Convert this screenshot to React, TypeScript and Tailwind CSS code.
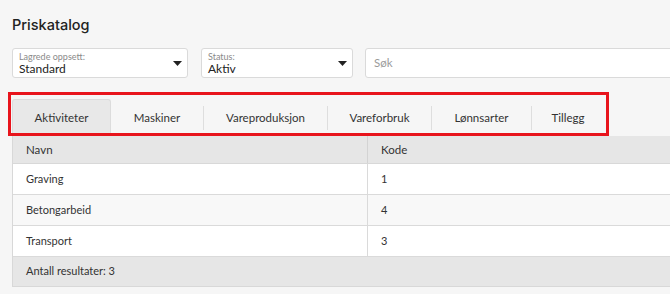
import React from "react";

const tabs = [
  { label: "Aktiviteter", w: "w-[99px]" },
  { label: "Maskiner", w: "w-[92px]" },
  { label: "Vareproduksjon", w: "w-[124px]" },
  { label: "Vareforbruk", w: "w-[104px]" },
  { label: "Lønnsarter", w: "w-[100px]" },
  { label: "Tillegg", w: "w-[73px]" },
];

const rows = [
  { navn: "Graving", kode: "1" },
  { navn: "Betongarbeid", kode: "4" },
  { navn: "Transport", kode: "3" },
];

function Caret() {
  return (
    <svg width="9" height="5" viewBox="0 0 9 5" className="shrink-0">
      <path d="M0 0h9L4.5 5z" fill="#222" />
    </svg>
  );
}

function Select({ label, value, width }: { label: string; value: string; width: string }) {
  return (
    <div className={`flex h-[30px] ${width} items-center justify-between rounded-[3px] border border-[#dadada] bg-white pl-[6px] pr-[5px]`}>
      <div className="flex flex-col leading-none">
        <span className="text-[9px] text-[#8a8a8a]">{label}</span>
        <span className="mt-[2px] text-[12px] text-[#222]">{value}</span>
      </div>
      <Caret />
    </div>
  );
}

export default function App() {
  return (
    <div className="relative h-[294px] w-[670px] overflow-hidden bg-[#f6f6f6] font-['Lato',sans-serif]">
      <div className="w-[760px] pl-3">
        <h1 className="pt-[15px] font-['Inter',sans-serif] text-[14.5px] font-medium leading-5 text-[#222]">Priskatalog</h1>

        <div className="mt-[13px] flex gap-3">
          <Select label="Lagrede oppsett:" value="Standard" width="w-[176px]" />
          <div className="ml-px">
            <Select label="Status:" value="Aktiv" width="w-[152px]" />
          </div>
          <div className="flex h-[30px] flex-1 items-center rounded-[3px] border border-[#dadada] bg-white pl-2 text-[11.5px] text-[#9a9a9a]">
            Søk
          </div>
        </div>

        <div className="mt-[21px] flex h-[37px] items-stretch text-[11.5px] text-[#333]">
          {tabs.map((t, i) => (
            <div key={t.label} className={`flex items-center ${t.w}`}>
              {i > 1 && <div className="h-[24px] w-px shrink-0 bg-[#dedede]" />}
              <div
                className={
                  i === 0
                    ? "flex h-full flex-1 items-center justify-center rounded-t-[3px] border border-b-0 border-[#dcdcdc] bg-[#e8e8e8]"
                    : "flex h-full flex-1 items-center justify-center"
                }
              >
                {t.label}
              </div>
            </div>
          ))}
        </div>

        <div className="border-l border-[#d8d8d8] text-[11px] text-[#333]">
          <div className="flex h-[28px] items-center border-b border-[#d8d8d8] bg-[#e6e6e6] text-[11.5px]">
            <div className="flex h-full w-[355px] items-center border-r border-[#d3d3d3] pl-[13px]">Navn</div>
            <div className="pl-[13px]">Kode</div>
          </div>
          {rows.map((r, i) => (
            <div
              key={r.navn}
              className={`flex h-[31px] items-center border-b border-[#dadada] ${i === 1 ? "bg-[#f8f8f8]" : "bg-white"}`}
            >
              <div className="flex h-full w-[355px] items-center border-r border-[#dadada] pl-[13px]">{r.navn}</div>
              <div className="pl-[13px]">{r.kode}</div>
            </div>
          ))}
          <div className="flex h-[30px] items-center border-b border-[#d8d8d8] bg-[#e6e6e6] pl-[13px]">
            Antall resultater: 3
          </div>
        </div>
      </div>

      <div className="pointer-events-none absolute left-[8px] top-[92px] h-[44px] w-[601px] border-[3px] border-[#e8141c]" />
    </div>
  );
}
